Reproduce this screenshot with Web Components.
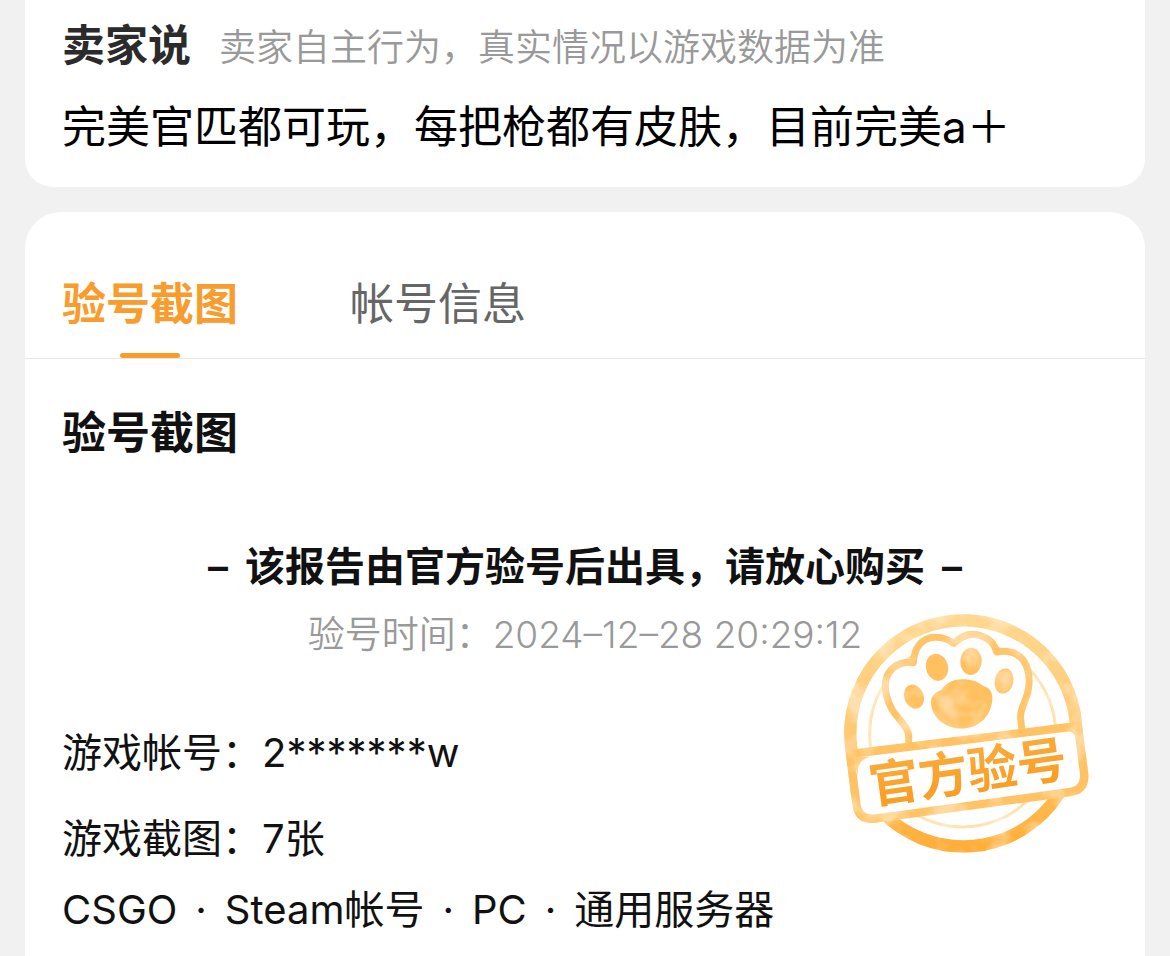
<!DOCTYPE html>
<html lang="zh-CN">
<head>
<meta charset="utf-8">
<meta name="viewport" content="width=device-width, initial-scale=1">
<title>验号报告</title>
<style>
  body {
    margin: 0;
    min-height: 100vh;
    background: #f1f1f1;
    color: #111;
    font-family: Inter, "Noto Sans CJK SC", sans-serif;
    overflow: hidden auto;
    scrollbar-width: none;
  }
</style>
</head>
<body>
<report-page></report-page>

<script>
const define = (name, html, setup) => {
  const template = document.createElement('template');
  template.innerHTML = html;
  customElements.define(name, class extends HTMLElement {
    constructor() {
      super();
      this.attachShadow({ mode: 'open' }).append(template.content.cloneNode(true));
    }
    connectedCallback() {
      if (setup) setup(this, this.shadowRoot);
    }
  });
};

define('seller-note', `
  <style>
    :host { display: block; background: #fff; border-radius: 0 0 28px 28px; padding: 15px 37px 30px; }
    header { display: flex; align-items: baseline; gap: 28px; line-height: 60px; }
    h2 { margin: 0; font-size: 43px; font-weight: 700; color: #2b2b2b; }
    small { font-size: 37px; font-weight: 350; color: #999; }
    p { margin: 19px 0 0; font-size: 44px; line-height: 60px; color: #000; }
  </style>
  <header><h2><slot name="title"></slot></h2><small><slot name="hint"></slot></small></header>
  <p><slot></slot></p>
`);

define('tab-bar', `
  <style>
    :host { display: flex; gap: 112px; padding: 62px 37px 0; border-bottom: 1px solid #e8e8e8; }
    button {
      position: relative; margin: 0; padding: 0 0 24px; border: 0; background: none;
      font: 400 44px/60px Inter, "Noto Sans CJK SC", sans-serif; color: #666; cursor: pointer;
    }
    button[aria-selected="true"] { font-weight: 600; color: #f79c2d; }
    button[aria-selected="true"]::after {
      content: ""; position: absolute; left: 50%; bottom: 0; width: 60px; height: 5px;
      margin-left: -30px; border-radius: 3px; background: #f79c2d;
    }
  </style>
  <button role="tab" aria-selected="true">验号截图</button>
  <button role="tab" aria-selected="false">帐号信息</button>
`, (host, root) => {
  host.setAttribute('role', 'tablist');
  const tabs = [...root.querySelectorAll('button')];
  tabs.forEach(tab => {
    tab.onclick = () => tabs.forEach(t => t.setAttribute('aria-selected', String(t === tab)));
  });
});

define('verified-stamp', `
  <style>
    :host { display: block; width: 290px; height: 270px; pointer-events: none; }
    svg { display: block; width: 100%; height: 100%; }
    text { font-family: "Noto Sans CJK SC", sans-serif; font-weight: 700; }
  </style>
  <svg viewBox="0 0 870 810" role="img" aria-label="官方验号">
    <defs>
      <linearGradient id="ring" x1="0" y1="0" x2="0" y2="1">
        <stop offset="0" stop-color="#ffd78f"/>
        <stop offset=".55" stop-color="#ffc76e"/>
        <stop offset="1" stop-color="#ffae38"/>
      </linearGradient>
      <linearGradient id="ink" x1="0" y1="0" x2="0" y2="1">
        <stop offset="0" stop-color="#fbb040"/>
        <stop offset="1" stop-color="#f99a20"/>
      </linearGradient>
      <filter id="wash" x="0" y="0" width="870" height="810" filterUnits="userSpaceOnUse">
        <feTurbulence type="fractalNoise" baseFrequency=".012" numOctaves="3" seed="8" result="n"/>
        <feColorMatrix in="n" type="matrix" values="0 0 0 0 0  0 0 0 0 0  0 0 0 0 0  3.4 0 0 0 -.9" result="mask"/>
        <feComposite in="SourceGraphic" in2="mask" operator="in" result="spots"/>
        <feComponentTransfer in="SourceGraphic" result="base"><feFuncA type="linear" slope=".62"/></feComponentTransfer>
        <feMerge><feMergeNode in="base"/><feMergeNode in="spots"/></feMerge>
      </filter>
    </defs>
    <g filter="url(#wash)">
      <circle cx="430" cy="400" r="339" fill="#fff" stroke="url(#ring)" stroke-width="37"/>
      <circle cx="428" cy="402" r="279" fill="none" stroke="#ffe2b0" stroke-width="9"/>
      <path d="M266 440 V404 C262 376 236 362 216 328 C196 290 190 262 200 232 C212 200 242 183 280 188 C282 145 305 112 346 112 C368 112 384 118 402 130 C424 108 450 98 478 106 C508 114 524 132 530 156 C566 148 596 160 612 184 C628 212 630 246 624 274 C618 304 598 330 602 356 L607 400" fill="#fff" stroke="#ffc468" stroke-width="21" stroke-linejoin="round"/>
      <g fill="#ffc161">
        <ellipse cx="351" cy="202" rx="33" ry="41" transform="rotate(-14 351 202)"/>
        <ellipse cx="453" cy="184" rx="32" ry="41" transform="rotate(4 453 184)"/>
        <ellipse cx="282" cy="290" rx="29" ry="37" transform="rotate(-20 282 290)"/>
        <ellipse cx="552" cy="243" rx="28" ry="38" transform="rotate(12 552 243)"/>
        <path d="M333 306 C334 284 350 276 364 270 C376 250 398 239 426 238 C456 238 474 246 490 258 C508 262 518 276 517 298 C514 346 480 384 428 386 C374 386 334 352 333 306Z"/>
      </g>
      <path d="M90 462 L774 378 L792 518 Q798 568 752 576 L164 656 Q118 660 110 618 Z" fill="#fff" stroke="#ffc365" stroke-width="25" stroke-linejoin="round"/>
      <path d="M100 470 H150 Q108 480 114 530Z M764 386 H720 Q774 392 780 440Z" fill="#ffc970"/>
    </g>
    <text x="444" y="570" font-size="149" fill="url(#ink)" text-anchor="middle" transform="rotate(-8 444 520)">官方验号</text>
  </svg>
`);

define('report-line', `
  <style>
    :host { display: flex; gap: 18px; font-size: 40px; line-height: 60px; color: #111; }
  </style>
  <slot></slot>
`);

define('verify-report', `
  <style>
    :host { display: block; padding: 44px 37px 16px; }
    h2 { margin: 0; font-size: 44px; line-height: 60px; font-weight: 600; }
    section { position: relative; margin-top: 74px; }
    h3 { display: flex; justify-content: center; gap: 17px; margin: 0; font-size: 40px; line-height: 60px; font-weight: 600; }
    time { display: block; margin-top: 12px; font-size: 37px; line-height: 52px; font-weight: 350; color: #999; text-align: center; }
    .lines { display: grid; margin-top: 62px; }
    .lines report-line + report-line { margin-top: 26px; }
    .lines report-line + .meta { margin-top: 11px; }
    verified-stamp { position: absolute; top: 63px; right: -2px; }
  </style>
  <h2>验号截图</h2>
  <section>
    <h3><span>–</span><span>该报告由官方验号后出具，请放心购买</span><span>–</span></h3>
    <time datetime="2024-12-28T20:29:12">验号时间：2024–12–28 20:29:12</time>
    <div class="lines">
      <report-line>游戏帐号：2*******w</report-line>
      <report-line>游戏截图：7张</report-line>
      <report-line class="meta"><span>CSGO</span><span>·</span><span>Steam帐号</span><span>·</span><span>PC</span><span>·</span><span>通用服务器</span></report-line>
    </div>
    <verified-stamp></verified-stamp>
  </section>
`);

define('report-page', `
  <style>
    :host { display: grid; gap: 25px; padding: 0 25px; }
    article { background: #fff; border-radius: 36px 36px 0 0; }
  </style>
  <seller-note>
    <span slot="title">卖家说</span>
    <span slot="hint">卖家自主行为，真实情况以游戏数据为准</span>
    完美官匹都可玩，每把枪都有皮肤，目前完美a＋
  </seller-note>
  <article>
    <tab-bar></tab-bar>
    <verify-report></verify-report>
  </article>
`);
</script>
</body>
</html>
